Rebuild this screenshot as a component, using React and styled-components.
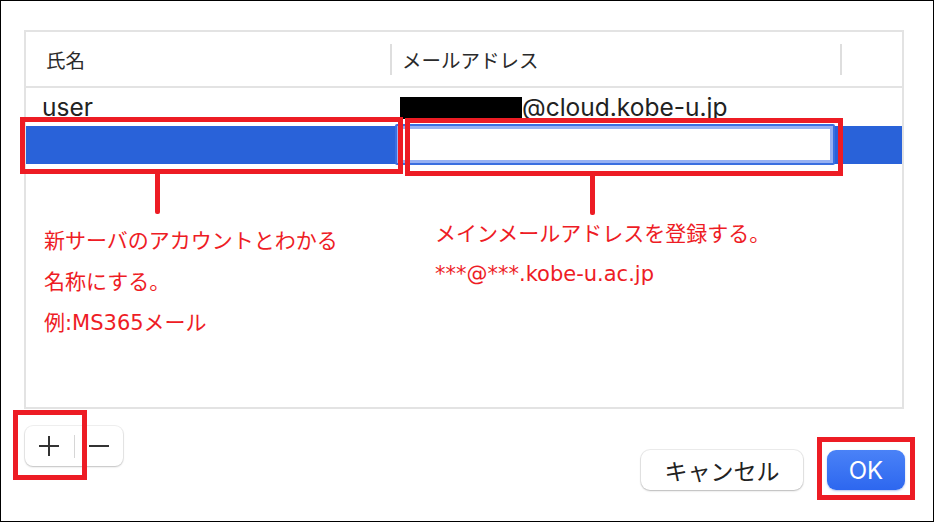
import React from "react";
import styled, { createGlobalStyle } from "styled-components";

const Global = createGlobalStyle`
  html, body { margin: 0; padding: 0; background: #fff; }
  body { font-family: Inter, "Noto Sans CJK JP", sans-serif; }
  * { box-sizing: border-box; }
`;

const Frame = styled.div`
  position: relative;
  width: 934px;
  height: 522px;
  border: 1px solid #000;
  background: #fff;
  padding: 29px 29px 0 23px;
  display: flex;
  flex-direction: column;
`;

const Table = styled.div`
  width: 880px;
  height: 379px;
  border: 2px solid #e3e3e3;
  display: flex;
  flex-direction: column;
`;

const HeaderRow = styled.div`
  height: 56px;
  border-bottom: 2px solid #e3e3e3;
  display: grid;
  grid-template-columns: 366px 450px 1fr;
  align-items: center;
`;

const HeaderCell = styled.div`
  height: 31px;
  display: flex;
  align-items: center;
  padding-left: ${(p) => p.$pad}px;
  border-right: ${(p) => (p.$divider ? "2px solid #dedede" : "none")};
  font-family: "Noto Sans CJK JP", sans-serif;
  font-size: 19.5px;
  color: #2a2a2a;
`;

const Row = styled.div`
  height: 38px;
  display: grid;
  grid-template-columns: 367px 1fr;
  align-items: center;
  background: ${(p) => (p.$selected ? "#2962d9" : "transparent")};
`;

const Cell = styled.div`
  padding-left: ${(p) => p.$pad}px;
  font-family: Inter, sans-serif;
  font-size: 24.5px;
  color: #222;
  display: flex;
  align-items: center;
  white-space: nowrap;
`;

const Redacted = styled.span`
  display: inline-block;
  width: 122px;
  height: 22px;
  background: #000;
  margin-top: 1px;
`;

const EditField = styled.div`
  width: 440px;
  height: 41px;
  margin: -2px 0 -1px 2px;
  background: #fff;
  border: 2px solid #3a6fe0;
  box-shadow: inset 0 0 0 3px #96b1f3;
  border-radius: 2px;
`;

const Footer = styled.div`
  display: flex;
  justify-content: space-between;
  align-items: flex-start;
  padding-top: 17px;
`;

const PlusMinus = styled.div`
  margin-left: 1px;
  width: 98px;
  height: 40px;
  border-radius: 8px;
  background: #fff;
  box-shadow: 0 0 0 1px rgba(0,0,0,0.06), 0 1px 2px rgba(0,0,0,0.2);
  display: flex;
  align-items: center;
`;

const PMButton = styled.div`
  flex: 1;
  height: 100%;
  display: flex;
  align-items: center;
  justify-content: center;
`;

const PMDivider = styled.div`
  width: 1px;
  height: 23px;
  background: #d6d6d6;
`;

const DialogButtons = styled.div`
  display: flex;
  gap: 24px;
  padding-top: 24px;
  margin-right: -1px;
`;

const Button = styled.div`
  height: 40px;
  width: ${(p) => p.$w}px;
  border-radius: 9px;
  display: flex;
  align-items: center;
  justify-content: center;
  font-family: ${(p) => (p.$primary ? "Inter" : "\"Noto Sans CJK JP\"")}, sans-serif;
  font-size: ${(p) => (p.$primary ? 24 : 23)}px;
  color: ${(p) => (p.$primary ? "#fff" : "#222")};
  background: ${(p) =>
    p.$primary ? "linear-gradient(#4a82f7, #2d67ef)" : "#fff"};
  box-shadow: ${(p) =>
    p.$primary
      ? "0 1px 2px rgba(40,80,200,0.35)"
      : "0 0 0 1px rgba(0,0,0,0.07), 0 1px 2px rgba(0,0,0,0.22)"};
`;

/* annotation overlay */
const RedBox = styled.div`
  position: absolute;
  left: ${(p) => p.$x}px;
  top: ${(p) => p.$y}px;
  width: ${(p) => p.$w}px;
  height: ${(p) => p.$h}px;
  border: 5px solid #ed1c24;
`;

const RedLine = styled.div`
  position: absolute;
  left: ${(p) => p.$x}px;
  top: ${(p) => p.$y}px;
  width: 5px;
  height: ${(p) => p.$h}px;
  background: #ed1c24;
  border-radius: 0 0 2px 2px;
`;

const Note = styled.div`
  position: absolute;
  left: ${(p) => p.$x}px;
  top: ${(p) => p.$y}px;
  display: flex;
  flex-direction: column;
  font-family: "DejaVu Sans", "Noto Sans CJK JP", sans-serif;
  font-size: 21px;
  line-height: ${(p) => p.$lh}px;
  color: #ee1c25;
  white-space: nowrap;
`;

function PlusIcon() {
  return (
    <svg width="22" height="22" viewBox="0 0 22 22">
      <path d="M11 1v20M1 11h20" stroke="#333" strokeWidth="2" />
    </svg>
  );
}
function MinusIcon() {
  return (
    <svg width="22" height="22" viewBox="0 0 22 22">
      <path d="M1 11h20" stroke="#333" strokeWidth="2" />
    </svg>
  );
}

export default function App() {
  return (
    <>
      <Global />
      <Frame>
        <Table>
          <HeaderRow>
            <HeaderCell $pad={20} $divider>氏名</HeaderCell>
            <HeaderCell $pad={10} $divider>メールアドレス</HeaderCell>
            <HeaderCell $pad={0} />
          </HeaderRow>
          <Row>
            <Cell $pad={16}>user</Cell>
            <Cell $pad={7}>
              <Redacted />
              @cloud.kobe-u.jp
            </Cell>
          </Row>
          <Row $selected>
            <Cell $pad={0} />
            <EditField />
          </Row>
        </Table>
        <Footer>
          <PlusMinus>
            <PMButton><PlusIcon /></PMButton>
            <PMDivider />
            <PMButton><MinusIcon /></PMButton>
          </PlusMinus>
          <DialogButtons>
            <Button $w={162}>キャンセル</Button>
            <Button $w={78} $primary>OK</Button>
          </DialogButtons>
        </Footer>

        <RedBox $x={19} $y={116} $w={383} $h={57} />
        <RedBox $x={404} $y={117} $w={438} $h={58} />
        <RedBox $x={12} $y={409} $w={74} $h={70} />
        <RedBox $x={816} $y={436} $w={98} $h={63} />
        <RedLine $x={154} $y={172} $h={41} />
        <RedLine $x={589} $y={174} $h={40} />
        <Note $x={43} $y={220} $lh={41}>
          <span>新サーバのアカウントとわかる</span>
          <span>名称にする。</span>
          <span>例:MS365メール</span>
        </Note>
        <Note $x={434} $y={213} $lh={40}>
          <span>メインメールアドレスを登録する。</span>
          <span>***@***.kobe-u.ac.jp</span>
        </Note>
      </Frame>
    </>
  );
}
